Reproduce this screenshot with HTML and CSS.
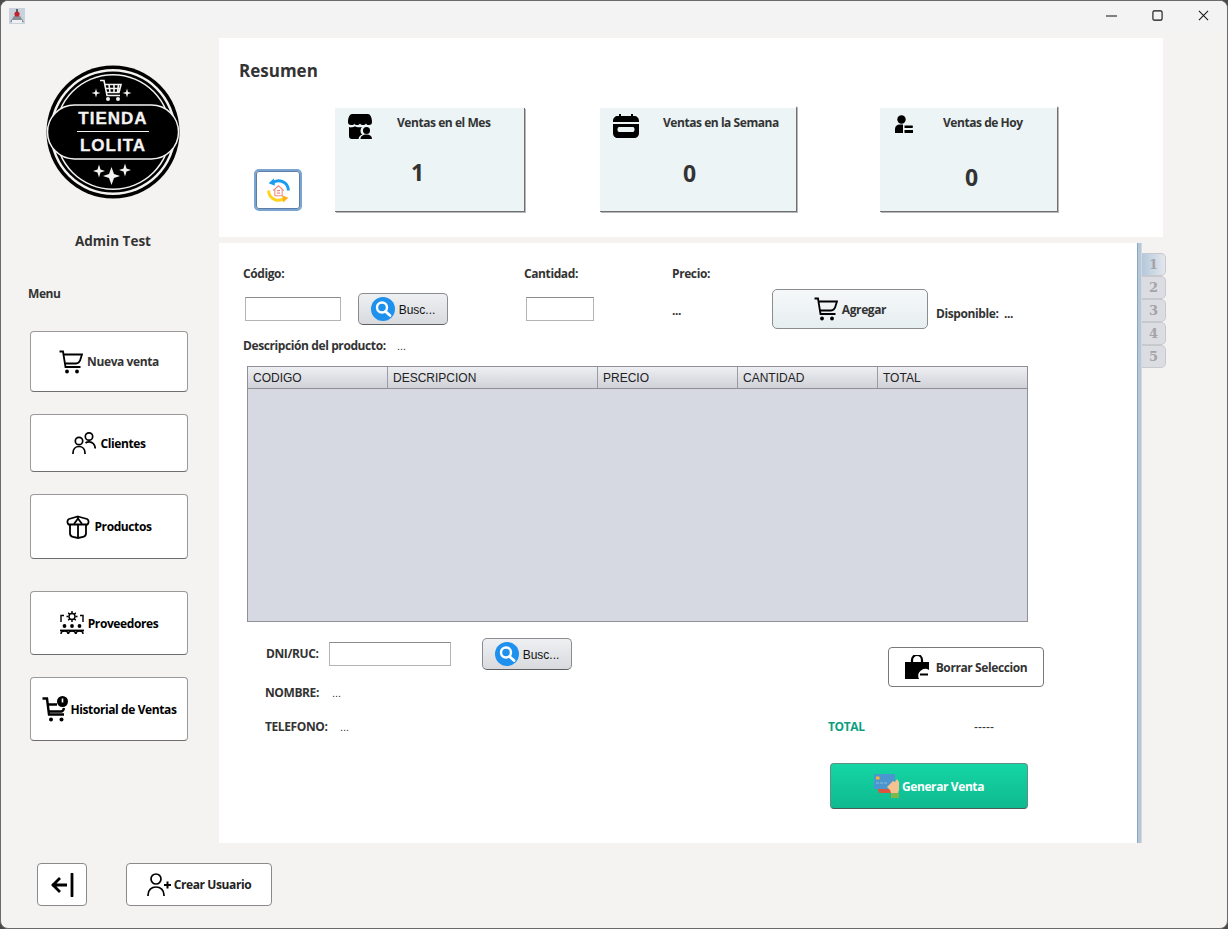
FILE: index.html
```html
<!DOCTYPE html>
<html lang="es">
<head>
    <meta charset="UTF-8">
    <title>Tienda Lolita</title>
    <link rel="stylesheet" href="styles.css">
</head>
<body>

<svg class="sprites" width="0" height="0">
    <symbol id="cart" viewBox="0 0 24 24">
        <path d="M0.5 1.5h3.5l2.5 15.5h15" fill="none" stroke="#000" stroke-width="1.8"/>
        <path d="M4.500 4.500h18.500l-1 3c-.8 3.500-2 6-5 6h-11" fill="none" stroke="#000" stroke-width="1.800"/>
        <circle cx="8" cy="21.500" r="1.900"/>
        <circle cx="18" cy="21.500" r="1.900"/>
    </symbol>
    <symbol id="search" viewBox="0 0 24 24">
        <circle cx="12" cy="12" r="12" fill="#1e90ee"/>
        <circle cx="11" cy="10.500" r="5" fill="none" stroke="#fff" stroke-width="2.400"/>
        <path d="M14.500 14.500l4.500 4" stroke="#fff" stroke-width="2.800" stroke-linecap="round"/>
    </symbol>
</svg>

<div class="window">
    <div class="titlebar">
        <svg class="app-icon" viewBox="0 0 16 16">
            <rect width="16" height="16" fill="#c9d2dc"/>
            <path d="M1 14l4-6h6l4 6z" fill="#8a8f98"/>
            <path d="M3 15h10v-3H3z" fill="#eef0f3"/>
            <circle cx="8" cy="6" r="2.600" fill="#c2222c"/>
            <path d="M8 1v3" stroke="#333" stroke-width="1.400"/>
        </svg>
        <div class="controls">
            <svg viewBox="0 0 12 12"><path d="M0 6.500h12" stroke="#111" stroke-width="1.100"/></svg>
            <svg viewBox="0 0 12 12"><rect x="1" y="1" width="10" height="10" rx="1.500" fill="none" stroke="#111" stroke-width="1.200"/></svg>
            <svg viewBox="0 0 12 12"><path d="M1 1l10 10M11 1L1 11" stroke="#111" stroke-width="1.100"/></svg>
        </div>
    </div>

    <div class="content">
        <aside class="sidebar">
            <svg class="logo" viewBox="0 0 134 134">
                <circle cx="67" cy="67" r="66.500"/>
                <circle cx="67" cy="67" r="63" fill="#f4f3f2"/>
                <circle cx="67" cy="67" r="60.500"/>
                <circle cx="67" cy="67" r="58" fill="#f4f3f2"/>
                <circle cx="67" cy="67" r="56.500"/>
                <rect x="1.500" y="40" width="131" height="54" rx="27" stroke="#f4f3f2" stroke-width="1.500"/>
                <rect x="4" y="42.500" width="126" height="49" rx="24"/>
                <text class="logo-text" x="67" y="59">TIENDA</text>
                <path d="M31 66.500h72" stroke="#f4f3f2" stroke-width="1.200"/>
                <text class="logo-text" x="67" y="86">LOLITA</text>
                <g fill="none" stroke="#f4f3f2" stroke-width="1.600">
                    <path d="M54 15.500h4l3 15h13"/>
                    <path d="M58 19.500h17l-2 8H60M63 19.500l1 8M68 19.500v8M72.500 19.500l-1 8M59 23.500h15"/>
                </g>
                <circle cx="62" cy="34" r="2" fill="#f4f3f2"/>
                <circle cx="72" cy="34" r="2" fill="#f4f3f2"/>
                <g fill="#f4f3f2">
                    <path d="M45.500 28l3.500-1 1-3.500 1 3.500 3.500 1-3.500 1-1 3.500-1-3.500z"/>
                    <path d="M76.500 28l3.500-1 1-3.500 1 3.500 3.500 1-3.500 1-1 3.500-1-3.500z"/>
                    <path d="M47 106l4.500-1.500 1.500-5 1.500 5 4.500 1.500-4.500 1.500-1.500 5-1.500-5z"/>
                    <path d="M57 111l6-2 2.500-7 2.500 7 6 2-6 2-2.500 7-2.500-7z"/>
                    <path d="M73 105l4.500-1.500 1.500-5 1.500 5 4.500 1.500-4.500 1.500-1.500 5-1.500-5z"/>
                </g>
            </svg>
            <div class="user-name">Admin Test</div>
            <div class="menu-label">Menu</div>

            <button class="nav-btn nav-ventas">
                <svg class="icon"><use href="#cart"/></svg>
                Nueva venta
            </button>
            <button class="nav-btn nav-clientes">
                <svg class="icon" viewBox="0 0 24 24" fill="none" stroke="#000" stroke-width="1.700">
                    <circle cx="7" cy="10" r="3.700"/>
                    <path d="M1 23v-1c0-4 2.500-6.500 6-6.500s6 2.500 6 6.500v1"/>
                    <circle cx="17" cy="5.500" r="3.700"/>
                    <path d="M13.500 12c1-.8 2.200-1.200 3.500-1.200 3.700 0 6.200 3 6.200 6.700"/>
                </svg>
                Clientes
            </button>
            <button class="nav-btn nav-productos">
                <svg class="icon" viewBox="0 0 24 24" fill="none" stroke="#000" stroke-width="1.800">
                    <path d="M12 1.500l9 2.500c2 1 2 4 .5 5.500H2.500C1 8 1 5 3 4z"/>
                    <path d="M4 9.500v9c0 2 1.500 3 3 3.500l5 1 5-1c1.500-.5 3-1.500 3-3.500v-9"/>
                    <path d="M12 1.500v2M8 9l4-5.500L16 9M12 9v14"/>
                </svg>
                Productos
            </button>
            <button class="nav-btn nav-proveedores">
                <svg class="icon" viewBox="0 0 24 24" fill="none" stroke="#000" stroke-width="1.400">
                    <circle cx="12" cy="5.500" r="3"/>
                    <path d="M12 0v2M12 9v2M6.500 5.500h2M15.500 5.500h2M8.200 1.700l1.500 1.500M14.300 7.800l1.500 1.500M15.800 1.700l-1.500 1.500M9.700 7.800L8.200 9.300"/>
                    <path d="M1 11V4.500h3M23 11V4.500h-3"/>
                    <circle cx="4.500" cy="15" r="1.900" fill="#000" stroke="none"/>
                    <circle cx="12" cy="15" r="1.900" fill="#000" stroke="none"/>
                    <circle cx="19.500" cy="15" r="1.900" fill="#000" stroke="none"/>
                    <path d="M0 19.500h24" stroke-width="1.800"/>
                    <path d="M1 23c0-2 1-3 3.500-3s3.500 1 3.500 3M8.500 23c0-2 1-3 3.500-3s3.500 1 3.500 3M16 23c0-2 1-3 3.500-3s3.500 1 3.500 3" stroke-width="1.500"/>
                </svg>
                Proveedores
            </button>
            <button class="nav-btn nav-historial">
                <svg class="icon icon-wide" viewBox="0 0 26 26" fill="none" stroke="#000" stroke-width="2.400">
                    <path d="M0.500 2.500h4.500l2 16h15"/>
                    <path d="M5.500 8.500H15M22 12c-.5 2.500-1.500 3.500-3 3.500H7"/>
                    <circle cx="20.500" cy="5.500" r="5.500" fill="#000" stroke="none"/>
                    <path d="M20.500 2.500V6.500" stroke="#fff" stroke-width="1.600"/>
                    <circle cx="9" cy="23.500" r="2" fill="#000" stroke="none"/>
                    <circle cx="19.500" cy="23.500" r="2" fill="#000" stroke="none"/>
                </svg>
                Historial de Ventas
            </button>
        </aside>

        <main class="main">
            <section class="summary">
                <h1 class="summary-title">Resumen</h1>
                <div class="summary-row">
                    <button class="refresh-btn">
                        <svg viewBox="0 0 24 24" width="25" height="25" fill="none">
                            <path d="M21.500 12A9.500 9.500 0 0 0 6 4.800" stroke="#1c9cf0" stroke-width="2.800"/>
                            <path d="M7.500 0.500L2.500 5l6 2.500z" fill="#1c9cf0"/>
                            <path d="M2.500 12A9.500 9.500 0 0 0 18 19.200" stroke="#ffd21e" stroke-width="2.800"/>
                            <path d="M16.500 23.500L21.500 19l-6-2.500z" fill="#ffb21e"/>
                            <path d="M7 12l5-4.500 5 4.500M8.500 11v6h7v-6" stroke="#ef8a80" stroke-width="1"/>
                            <path d="M10.500 12h3M10.500 14.500h3" stroke="#ef8a80" stroke-width="1.200"/>
                        </svg>
                    </button>

                    <div class="card card-month">
                        <svg class="card-icon" viewBox="0 0 24 25">
                            <path d="M4 0h16c2 0 4 3 4 8 0 2-1 3-3 3-1.500 0-2.500-.5-3-1.500-.8 1-1.800 1.500-3 1.500s-2.300-.5-3-1.500c-.7 1-1.800 1.500-3 1.500s-2.200-.5-3-1.500C6.500 10.500 5 11 3 11 1 11 0 10 0 8c0-5 2-8 4-8z"/>
                            <path d="M1 13c1 .5 2 .5 3 .3 1 0 2-.3 3-1 1.200.8 2.500 1 4 1 1 0 2 0 3-.3-1 1-1.500 2.500-1.500 4 0 1.500.7 3 2 3.500-2 .5-3.500 2-4 4.500H4c-2 0-3-1-3-3z"/>
                            <circle cx="18.500" cy="16.500" r="3.500"/>
                            <path d="M12.500 25c0-3 2.500-4.500 6-4.500s5.500 1.500 5.500 4.500z"/>
                        </svg>
                        <div class="card-title">Ventas en el Mes</div>
                        <div class="card-value">1</div>
                    </div>

                    <div class="card card-week">
                        <svg class="card-icon" viewBox="0 0 26 24">
                            <path d="M6 0h2v2h10V0h2v2h1c3 0 5 2 5 5v1H0V7c0-3 2-5 5-5h1z"/>
                            <path d="M0 10h26v9c0 3-2 5-5 5H5c-3 0-5-2-5-5zm6 3c-2 0-2 5 0 5h14c2 0 2-5 0-5z" fill-rule="evenodd"/>
                        </svg>
                        <div class="card-title">Ventas en la Semana</div>
                        <div class="card-value">0</div>
                    </div>

                    <div class="card card-today">
                        <svg class="card-icon" viewBox="0 0 18 18">
                            <circle cx="6.500" cy="4.500" r="4.200"/>
                            <path d="M0 18v-4c0-3 2-4.500 5-4.500h3v8.500z"/>
                            <path d="M9.500 10.500h8c.5 0 .5 2.500 0 2.500h-8zM9.500 15h8.500v3h-8.500z"/>
                        </svg>
                        <div class="card-title">Ventas de Hoy</div>
                        <div class="card-value">0</div>
                    </div>
                </div>
            </section>

            <section class="work">
                <div class="work-body">
                    <div class="row-labels">
                        <label class="lbl lbl-codigo">Código:</label>
                        <label class="lbl lbl-cantidad">Cantidad:</label>
                        <label class="lbl">Precio:</label>
                    </div>
                    <div class="row-inputs">
                        <input class="field field-codigo" type="text">
                        <button class="search-btn">
                            <svg class="search-icon"><use href="#search"/></svg>
                            Busc...
                        </button>
                        <input class="field field-cantidad" type="text">
                        <span class="lbl price-value">...</span>
                        <button class="add-btn">
                            <svg class="icon"><use href="#cart"/></svg>
                            Agregar
                        </button>
                        <span class="lbl disponible">Disponible:</span>
                        <span class="lbl disponible-value">...</span>
                    </div>
                    <div class="row-desc">
                        <span class="lbl desc-label">Descripción del producto:</span>
                        <span class="dots">...</span>
                    </div>

                    <div class="table">
                        <div class="table-head">
                            <div class="col col-codigo">CODIGO</div>
                            <div class="col col-desc">DESCRIPCION</div>
                            <div class="col col-num">PRECIO</div>
                            <div class="col col-num">CANTIDAD</div>
                            <div class="col col-total">TOTAL</div>
                        </div>
                    </div>

                    <div class="bottom">
                        <div class="client">
                            <div class="client-search">
                                <span class="lbl dni-label">DNI/RUC:</span>
                                <input class="field field-dni" type="text">
                                <button class="search-btn">
                                    <svg class="search-icon"><use href="#search"/></svg>
                                    Busc...
                                </button>
                            </div>
                            <div class="client-row client-nombre">
                                <span class="lbl nombre-label">NOMBRE:</span>
                                <span class="dots">...</span>
                            </div>
                            <div class="client-row client-telefono">
                                <span class="lbl telefono-label">TELEFONO:</span>
                                <span class="dots">...</span>
                            </div>
                        </div>
                        <div class="checkout">
                            <button class="clear-btn">
                                <svg class="icon" viewBox="0 0 24 24">
                                    <path d="M7 7V5a5 5 0 0 1 10 0v2" fill="none" stroke="#000" stroke-width="2.200"/>
                                    <path d="M0 7h24v8a7 7 0 0 0-10 9H0z"/>
                                    <path d="M15 19.500h8" stroke="#000" stroke-width="2"/>
                                </svg>
                                Borrar Seleccion
                            </button>
                            <div class="total-row">
                                <span class="total-label">TOTAL</span>
                                <span class="total-value">-----</span>
                            </div>
                            <button class="pay-btn">
                                <svg class="icon icon-card" viewBox="0 0 25 24">
                                    <path d="M3 13h14l1 6H5z" fill="#d9553f"/>
                                    <rect x="0" y="0" width="21" height="15" rx="1" fill="#4b96cf"/>
                                    <rect x="2" y="2.500" width="3.500" height="3" fill="#f5b335"/>
                                    <path d="M2 9h3M6 9h3M10 9h3" stroke="#8dbbe0" stroke-width="1.200"/>
                                    <path d="M13 13l6-6 2 1 2-3 2 3v8l-1 3h-7l-1-3z" fill="#f7c28f"/>
                                    <rect x="17" y="19" width="8" height="5" fill="#7eb84a"/>
                                </svg>
                                Generar Venta
                            </button>
                        </div>
                    </div>
                </div>

                <div class="tab-strip"></div>
                <div class="tabs">
                    <div class="tab tab-active">1</div>
                    <div class="tab">2</div>
                    <div class="tab">3</div>
                    <div class="tab">4</div>
                    <div class="tab">5</div>
                </div>
            </section>
        </main>
    </div>

    <footer class="footer">
        <button class="back-btn">
            <svg viewBox="0 0 24 24" width="24" height="24" fill="none" stroke="#000" stroke-width="2.800">
                <path d="M22 1v22" stroke-linecap="round"/>
                <path d="M2 12h15M10 5l-7 7 7 7"/>
            </svg>
        </button>
        <button class="user-btn">
            <svg class="icon" viewBox="0 0 24 24" fill="none" stroke="#000" stroke-width="1.700">
                <circle cx="9" cy="6" r="5"/>
                <path d="M1 23v-1c0-5 3.500-8 8-8s8 3 8 8v1"/>
                <path d="M17 12h7M20.500 8.500v7" stroke-width="2"/>
            </svg>
            Crear Usuario
        </button>
    </footer>
</div>

</body>
</html>
```

FILE: styles.css
```css
* {
    box-sizing: border-box;
}
body {
    margin: 0;
    background-color: #4a4a4a;
    font-family: "Open Sans", "Noto Sans", sans-serif;
    color: #333;
}
.sprites {
    position: absolute;
}
button {
    font-family: inherit;
    cursor: pointer;
}
.window {
    width: 1228px;
    height: 929px;
    background-color: #f4f3f2;
    border: 1px solid #6a6a6a;
    border-radius: 8px;
    overflow: hidden;
}

/* title bar */
.titlebar {
    height: 29px;
    background-color: #f3f3f3;
    display: flex;
    justify-content: space-between;
    align-items: center;
    padding: 0 18px 0 8px;
}
.app-icon {
    width: 16px;
    height: 16px;
}
.controls {
    display: flex;
    gap: 35px;
}
.controls svg {
    width: 11px;
    height: 11px;
}
.content {
    display: flex;
    margin-top: 8px;
}

/* left menu */
.sidebar {
    width: 218px;
    padding-left: 29px;
}
.logo {
    display: block;
    width: 134px;
    height: 134px;
    margin: 27px 0 0 16px;
}
.logo-text {
    font-family: "Liberation Sans", sans-serif;
    font-size: 17px;
    font-weight: bold;
    letter-spacing: 1px;
    text-anchor: middle;
    stroke: #f4f3f2;
    stroke-width: 0.3px;
    fill: #f4f3f2;
}
.user-name {
    width: 166px;
    margin-top: 33px;
    text-align: center;
    font-size: 13.500px;
    font-weight: 700;
}
.menu-label {
    margin: 36px 0 0 -2px;
    font-size: 12px;
    letter-spacing: -0.4px;
    font-weight: 700;
    line-height: 16px;
}
.nav-btn {
    display: flex;
    justify-content: center;
    align-items: center;
    gap: 4px;
    width: 158px;
    background-color: #fff;
    border: 1px solid #9a9a9c;
    border-bottom-color: #6e6e70;
    border-radius: 4px;
    font-size: 12px;
    letter-spacing: -0.4px;
    font-weight: 700;
    color: #000;
    padding: 0;
}
.nav-ventas {
    height: 61px;
    margin-top: 29px;
    color: #333;
}
.nav-clientes {
    height: 58px;
    margin-top: 22px;
}
.nav-productos {
    height: 65px;
    margin-top: 22px;
}
.nav-proveedores {
    height: 64px;
    margin-top: 32px;
}
.nav-historial {
    height: 64px;
    margin-top: 22px;
    gap: 3px;
}
.icon {
    flex-shrink: 0;
    width: 24px;
    height: 24px;
}
.icon-wide {
    width: 26px;
    height: 26px;
}
.icon-card {
    width: 25px;
}

/* summary */
.main {
    width: 944px;
}
.summary {
    height: 199px;
    background-color: #fff;
    padding: 22px 0 0 20px;
}
.summary-title {
    margin: 0;
    font-size: 17px;
    font-weight: 700;
    line-height: 22px;
}
.summary-row {
    display: flex;
    align-items: flex-end;
    height: 106px;
    margin: 24px 0 0 15px;
}
.refresh-btn {
    display: flex;
    justify-content: center;
    align-items: center;
    width: 48px;
    height: 42px;
    margin-bottom: 1px;
    padding: 0;
    background-color: #fff;
    border: 2px solid #7ba4d0;
    border-radius: 5px;
    box-shadow: inset 0 0 0 1px #5c7ea8;
}
.card {
    background-color: #ecf4f6;
    background-clip: padding-box;
    border-right: 1px solid #707070;
    border-bottom: 1px solid #707070;
    box-shadow: 1px 1px 0 #b8b8b8;
    display: grid;
    align-content: start;
}
.card-title {
    font-size: 12px;
    letter-spacing: -0.45px;
    font-weight: 700;
    line-height: 16px;
    margin-top: 1px;
}
.card-value {
    grid-column: 1 / 3;
    font-size: 23px;
    font-weight: 700;
    line-height: 30px;
}
.card-icon {
    display: block;
}
.card-month {
    width: 190px;
    height: 104px;
    margin-left: 33px;
    grid-template-columns: 49px 1fr;
    padding: 6px 0 0 13px;
}
.card-month .card-icon {
    width: 24px;
    height: 25px;
}
.card-month .card-value {
    margin: 18px 0 0 63px;
}
.card-week {
    width: 197px;
    height: 106px;
    margin-left: 75px;
    border-top: 2px solid #fff;
    grid-template-columns: 50px 1fr;
    padding: 6px 0 0 13px;
}
.card-week .card-icon {
    width: 26px;
    height: 24px;
}
.card-week .card-value {
    margin: 20px 0 0 70px;
}
.card-today {
    width: 178px;
    height: 106px;
    margin-left: 83px;
    border-top: 2px solid #fff;
    grid-template-columns: 48px 1fr;
    padding: 7px 0 0 15px;
}
.card-today .card-icon {
    width: 18px;
    height: 18px;
}
.card-today .card-value {
    margin: 29px 0 0 70px;
}
.card-today .card-title {
    margin-top: 0;
}

/* form */
.work {
    display: flex;
    align-items: flex-start;
    height: 600px;
    margin-top: 6px;
}
.work-body {
    flex: none;
    width: 918px;
    height: 600px;
    background-color: #fff;
    padding-top: 21px;
}
.tab-strip {
    flex: none;
    width: 5px;
    height: 600px;
    background-color: #b4c8dc;
    border-left: 1px solid #8ea4ba;
    border-right: 1px solid #d8d8dc;
}
.tabs {
    flex: none;
    width: 24px;
    margin-top: 10px;
}
.tab {
    height: 23px;
    background-color: #dcdde2;
    border: 1px solid #c8c9ce;
    border-left: none;
    border-radius: 0 5px 5px 0;
    font-family: "DejaVu Serif", serif;
    font-size: 13px;
    font-weight: 700;
    line-height: 21px;
    text-align: center;
    color: #a4a4a8;
}
.tab-active {
    background: linear-gradient(to right, #b4c8dc, #e4e7ec);
}
.lbl {
    font-size: 12px;
    letter-spacing: -0.4px;
    font-weight: 700;
    line-height: 20px;
}
.row-labels {
    display: flex;
    height: 20px;
    padding-left: 24px;
}
.lbl-codigo {
    width: 281px;
}
.lbl-cantidad {
    width: 148px;
}
.row-inputs {
    display: flex;
    align-items: center;
    height: 40px;
    margin-top: 5px;
    padding-left: 26px;
}
.field {
    height: 24px;
    padding: 0 2px;
    background-color: #fff;
    border: 1px solid #b4b4b4;
    border-top-color: #8c8c8c;
}
.field-codigo {
    width: 96px;
}
.field-cantidad {
    width: 68px;
    margin-left: 78px;
}
.field-dni {
    width: 122px;
}
.search-btn {
    display: flex;
    justify-content: center;
    align-items: center;
    gap: 4px;
    flex-shrink: 0;
    width: 90px;
    height: 32px;
    margin-left: 17px;
    padding: 1px 0 0;
    background: linear-gradient(#eff0f2, #d8dade);
    border: 1px solid #8a8c90;
    border-bottom-color: #5c5e62;
    border-radius: 5px;
    font-family: "Liberation Sans", sans-serif;
    font-size: 12px;
    color: #111;
}
.search-icon {
    width: 24px;
    height: 24px;
    margin-top: -1px;
}
.price-value {
    width: 100px;
    margin: 3px 0 0 78px;
}
.add-btn {
    display: flex;
    justify-content: center;
    align-items: center;
    gap: 4px;
    width: 156px;
    height: 40px;
    padding: 0;
    background: linear-gradient(#f6f8f9, #e6eef0);
    border: 1px solid #8a8c90;
    border-radius: 5px;
    font-size: 12px;
    letter-spacing: -0.4px;
    font-weight: 700;
    color: #333;
}
.disponible {
    width: 68px;
    margin: 9px 0 0 8px;
}
.disponible-value {
    margin-top: 9px;
}
.row-desc {
    display: flex;
    height: 20px;
    margin-top: 7px;
    padding-left: 24px;
}
.desc-label {
    width: 154px;
}
.dots {
    font-family: "Liberation Sans", sans-serif;
    font-size: 11px;
    line-height: 20px;
    color: #333;
}

/* table */
.table {
    width: 781px;
    height: 256px;
    margin: 10px 0 0 28px;
    background-color: #d6d9e1;
    border: 1px solid #8e9096;
}
.table-head {
    display: flex;
    height: 22px;
    background: linear-gradient(#eeeff2, #d0d2d9);
    border-bottom: 1px solid #8e9096;
}
.col {
    padding-left: 5px;
    border-right: 1px solid #9a9ca2;
    font-family: "Liberation Sans", sans-serif;
    font-size: 12px;
    line-height: 22px;
    color: #222;
}
.col-codigo {
    width: 140px;
}
.col-desc {
    width: 210px;
}
.col-num {
    width: 140px;
}
.col-total {
    flex: 1;
    border-right: none;
}

/* client and checkout */
.bottom {
    display: flex;
    margin-top: 16px;
}
.client {
    width: 609px;
    padding-left: 46px;
}
.client-search {
    display: flex;
    align-items: center;
    height: 32px;
    padding-left: 1px;
}
.dni-label {
    width: 63px;
}
.client-search .search-btn {
    margin-left: 31px;
}
.client-row {
    display: flex;
    height: 20px;
}
.client-nombre {
    margin-top: 13px;
}
.client-telefono {
    margin-top: 14px;
}
.nombre-label {
    width: 67px;
}
.telefono-label {
    width: 75px;
}
.clear-btn {
    display: flex;
    justify-content: center;
    align-items: center;
    gap: 7px;
    width: 156px;
    height: 40px;
    margin: 9px 0 0 60px;
    padding: 0;
    background-color: #fff;
    border: 1px solid #77797d;
    border-radius: 4px;
    font-size: 12px;
    letter-spacing: -0.4px;
    font-weight: 700;
    color: #333;
}
.total-row {
    display: flex;
    height: 20px;
    margin-top: 30px;
    line-height: 20px;
}
.total-label {
    width: 146px;
    font-size: 12px;
    letter-spacing: -0.4px;
    font-weight: 700;
    color: #0a9f80;
}
.total-value {
    font-family: "Liberation Sans", sans-serif;
    font-size: 12px;
}
.pay-btn {
    display: flex;
    justify-content: center;
    align-items: center;
    gap: 3px;
    width: 198px;
    height: 46px;
    margin: 26px 0 0 2px;
    padding: 0;
    background: linear-gradient(#15d6a6, #0fb98f);
    border: 1px solid #5f8f85;
    border-bottom-color: #4a5a58;
    border-radius: 4px;
    font-size: 12px;
    letter-spacing: -0.4px;
    font-weight: 700;
    color: #fff;
}

/* footer */
.footer {
    display: flex;
    margin-top: 20px;
    padding-left: 36px;
}
.back-btn {
    display: flex;
    justify-content: center;
    align-items: center;
    width: 50px;
    height: 43px;
    padding: 0;
    background-color: #fff;
    border: 1px solid #8a8a8c;
    border-radius: 4px;
}
.user-btn {
    display: flex;
    justify-content: center;
    align-items: center;
    gap: 3px;
    width: 146px;
    height: 43px;
    margin-left: 39px;
    padding: 0;
    background-color: #fff;
    border: 1px solid #8a8a8c;
    border-radius: 4px;
    font-size: 12px;
    letter-spacing: -0.4px;
    font-weight: 700;
    color: #222;
}
```
